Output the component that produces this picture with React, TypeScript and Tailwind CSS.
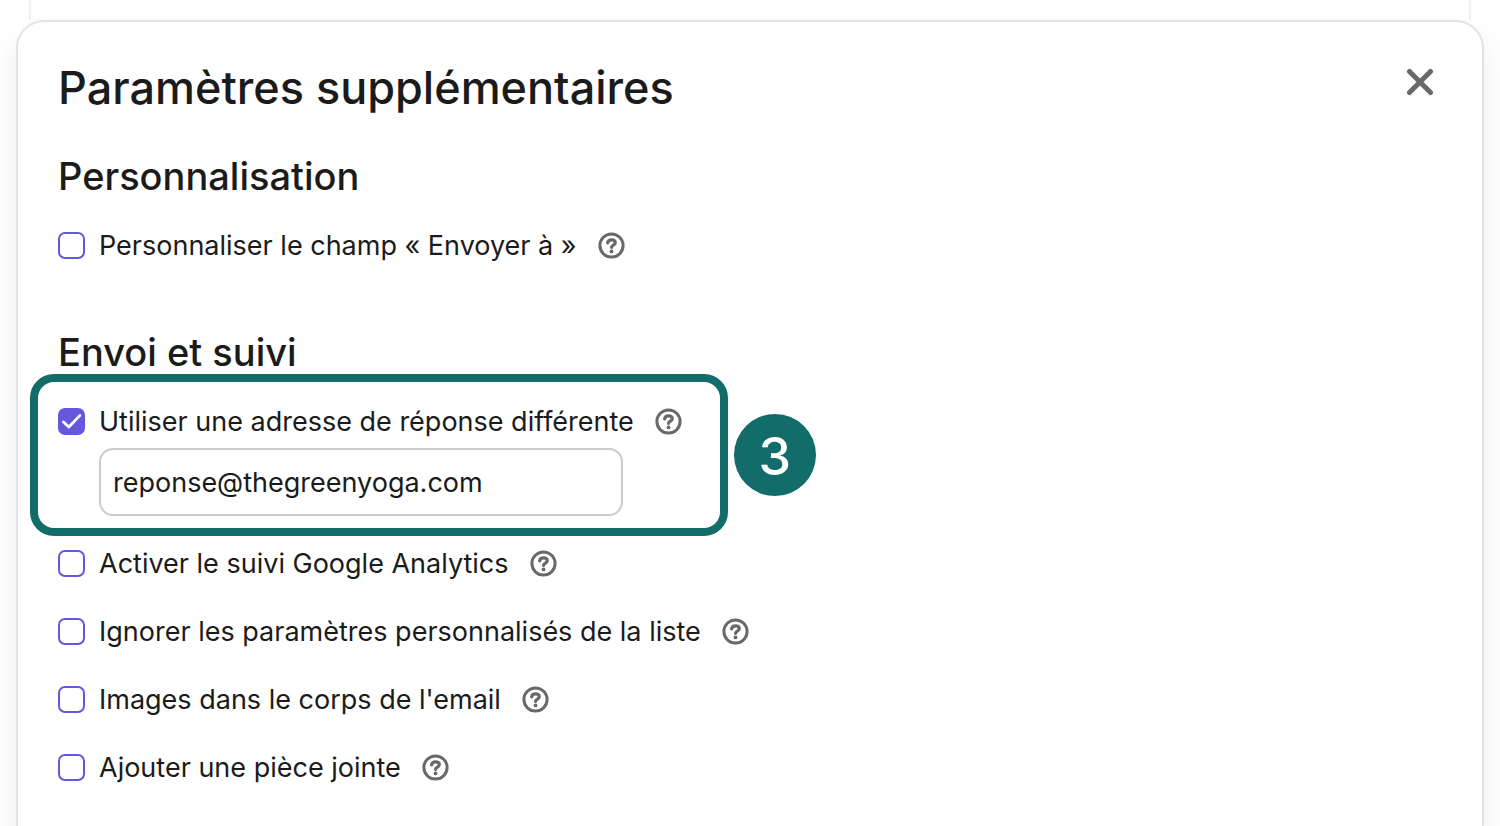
import { useState } from "react";

type Option = {
  id: string;
  label: string;
};

const TRACKING_OPTIONS: Option[] = [
  { id: "analytics", label: "Activer le suivi Google Analytics" },
  { id: "list-params", label: "Ignorer les paramètres personnalisés de la liste" },
  { id: "inline-images", label: "Images dans le corps de l'email" },
  { id: "attachment", label: "Ajouter une pièce jointe" },
];

export default function App() {
  return (
    <main className="min-h-screen bg-white px-4 font-['Inter',sans-serif] text-[#1b1b1b]">
      {/* bottom of the card above */}
      <div className="mx-[13px] h-5 border-x-2 border-[#f2f2f2]" />
      <div className="min-h-[calc(100vh-20px)] rounded-t-[28px] border-2 border-b-0 border-[#e3e3e3] bg-white px-10 pt-[38px] pb-[45px] shadow-[0_16px_32px_rgba(0,0,0,0.08)]">
        <header className="flex items-start justify-between">
          <h1 className="mt-1 text-[45px] leading-[48px] font-medium">
            Paramètres supplémentaires
          </h1>
          <button
            type="button"
            aria-label="Fermer"
            className="flex size-11 items-center justify-center text-[#696969]"
          >
            <CloseIcon />
          </button>
        </header>

        <section className="mt-11 flex flex-col items-start">
          <h2 className="mb-[35px] text-[38px] leading-10 font-medium">Personnalisation</h2>
          <CheckboxRow id="send-to" label="Personnaliser le champ « Envoyer à »" />
        </section>

        <section className="mt-[73px] flex flex-col items-start">
          <h2 className="mb-[35px] text-[38px] leading-10 font-medium">Envoi et suivi</h2>
          <ReplyToField />
          <div className="mt-[33px] flex flex-col items-start gap-10">
            {TRACKING_OPTIONS.map((o) => (
              <CheckboxRow key={o.id} id={o.id} label={o.label} />
            ))}
          </div>
        </section>
      </div>
    </main>
  );
}

function ReplyToField() {
  const [email, setEmail] = useState("reponse@thegreenyoga.com");

  return (
    <div className="relative">
      <CheckboxRow id="reply-to" label="Utiliser une adresse de réponse différente" defaultChecked />
      <input
        type="email"
        aria-label="Adresse de réponse"
        value={email}
        onChange={(e) => setEmail(e.target.value)}
        className="mt-[13px] ml-[41px] block h-[68px] w-[524px] rounded-[14px] border-2 border-[#cccccc] bg-white px-3 text-[27px]"
      />
      <div className="pointer-events-none absolute -top-[33px] -right-[46px] -bottom-5 -left-7 rounded-[24px] border-8 border-[#126c6a]" />
      <span className="absolute top-[7px] left-full ml-[52px] flex size-[82px] items-center justify-center rounded-full bg-[#126c6a] pt-1 text-[52px] leading-none font-medium text-white">
        3
      </span>
    </div>
  );
}

function CheckboxRow({
  id,
  label,
  defaultChecked = false,
}: Option & { defaultChecked?: boolean }) {
  return (
    <div className="flex h-7 items-center">
      <span className="relative flex">
        <input
          id={id}
          type="checkbox"
          defaultChecked={defaultChecked}
          className="peer size-[27px] appearance-none rounded-[7px] border-2 border-[#6558dd] bg-white checked:bg-[#6558dd]"
        />
        <CheckIcon />
      </span>
      <label htmlFor={id} className="ml-[14px] text-[27px] leading-[29px] whitespace-nowrap">
        {label}
      </label>
      <button type="button" aria-label={`Aide : ${label}`} className="ml-[21px] text-[#696969]">
        <HelpIcon />
      </button>
    </div>
  );
}

function CheckIcon() {
  return (
    <svg
      viewBox="0 0 27 27"
      fill="none"
      className="pointer-events-none invisible absolute inset-0 size-full text-white peer-checked:visible"
    >
      <path
        d="M5.5 14 L10.8 19 L21.8 7.6"
        stroke="currentColor"
        strokeWidth="2.8"
        strokeLinecap="round"
        strokeLinejoin="round"
      />
    </svg>
  );
}

function CloseIcon() {
  return (
    <svg viewBox="0 0 28 28" fill="none" className="size-7">
      <path d="M3.5 3.5 L24.5 24.5 M24.5 3.5 L3.5 24.5" stroke="currentColor" strokeWidth="5" strokeLinecap="round" />
    </svg>
  );
}

function HelpIcon() {
  return (
    <svg viewBox="0 0 27 27" fill="none" className="size-[27px]">
      <circle cx="13.5" cy="13.5" r="11.6" stroke="currentColor" strokeWidth="3" />
      <path
        d="M9.6 10.9 C10 8.9 11.5 7.9 13.5 7.9 C15.8 7.9 17.3 9 17.3 10.8 C17.3 13.1 13.6 13.2 13.5 15.4"
        stroke="currentColor"
        strokeWidth="3.2"
        strokeLinecap="round"
        strokeLinejoin="round"
      />
      <circle cx="13.5" cy="19.4" r="1.9" fill="currentColor" />
    </svg>
  );
}
